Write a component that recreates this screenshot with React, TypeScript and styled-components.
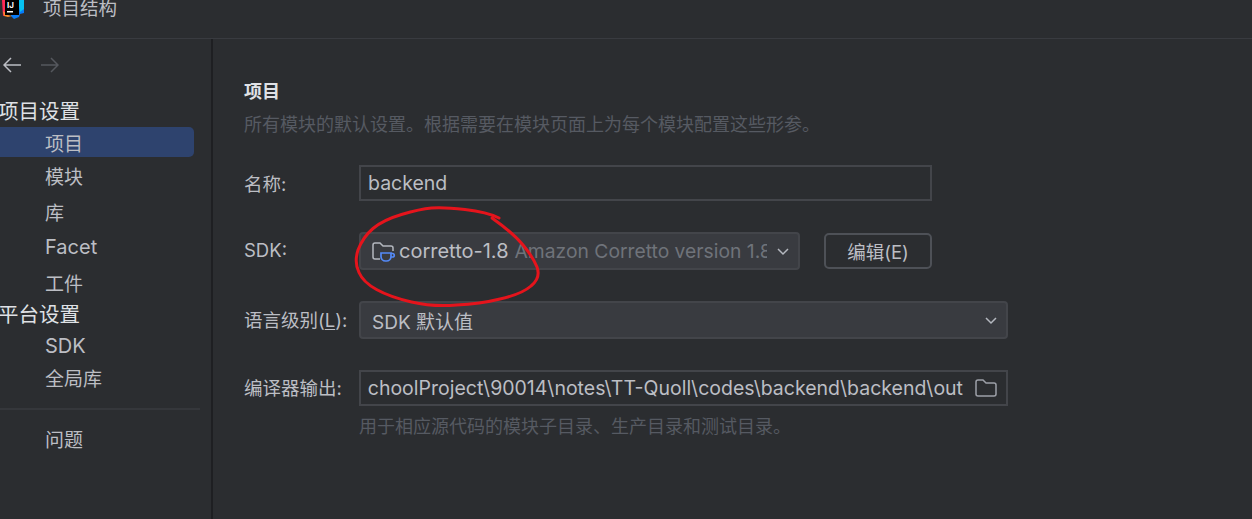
import React from "react";
import styled, { createGlobalStyle } from "styled-components";

const CJK = `Inter, "Noto Sans CJK SC", sans-serif`;

const GlobalStyle = createGlobalStyle`
  html, body {
    margin: 0;
    padding: 0;
    background: #2b2d30;
    overflow: hidden;
  }
  * { box-sizing: border-box; }
`;

const Page = styled.div`
  position: relative;
  width: 1252px;
  height: 519px;
  overflow: hidden;
  display: flex;
  flex-direction: column;
  background: #2b2d30;
  color: #bcbec4;
  font-family: ${CJK};
  font-size: 18px;
`;

const TitleBar = styled.header`
  height: 39px;
  flex: none;
  display: flex;
  align-items: flex-start;
  gap: 19px;
  padding-left: 1px;
  border-bottom: 1px solid #393b40;
  overflow: hidden;
`;

const LogoWrap = styled.div`
  width: 23px;
  height: 19px;
  flex: none;
`;

const WindowTitle = styled.span`
  font-size: 18.5px;
  line-height: 16px;
  color: #bcbec4;
`;

const Body = styled.div`
  flex: 1;
  display: flex;
  min-height: 0;
`;

const Sidebar = styled.nav`
  width: 213px;
  flex: none;
  border-right: 2px solid #1e1f22;
  padding-top: 17px;
`;

const NavArrows = styled.div`
  display: flex;
  align-items: center;
  gap: 20px;
  height: 18px;
  padding-left: 3px;
  margin-bottom: 27px;
`;

const GroupTitle = styled.div<{ $top?: number }>`
  height: 22px;
  line-height: 22px;
  margin-left: -2px;
  font-size: 20.5px;
  white-space: nowrap;
  color: #dfe1e5;
  margin-top: ${(p) => p.$top ?? 0}px;
`;

const NavItem = styled.div<{ $selected?: boolean; $height?: number; $top?: number; $latin?: boolean }>`
  width: 194px;
  height: ${(p) => p.$height ?? 35.5}px;
  margin-top: ${(p) => p.$top ?? 0}px;
  display: flex;
  align-items: center;
  padding-left: 45px;
  font-size: ${(p) => (p.$latin ? 20 : 19)}px;
  color: #bcbec4;
  border-radius: 0 5px 5px 0;
  background: ${(p) => (p.$selected ? "#2e436e" : "transparent")};
`;

const NavDivider = styled.hr`
  width: 200px;
  height: 2px;
  border: none;
  background: #35373b;
  margin: 18px 0 11px;
`;

const Content = styled.main`
  flex: 1;
  padding: 42px 0 0 31px;
`;

const Heading = styled.h2`
  margin: 0;
  font-size: 18px;
  font-weight: 700;
  line-height: 22px;
  color: #dfe1e5;
`;

const Description = styled.p`
  margin: 11px 0 0;
  font-size: 18px;
  line-height: 22px;
  color: #565a62;
`;

const Form = styled.div`
  display: grid;
  grid-template-columns: 115px 1fr;
  width: 764px;
  margin-top: 29px;
  align-items: center;
`;

const Label = styled.label<{ $top?: number }>`
  font-size: 18.5px;
  color: #bcbec4;
  white-space: nowrap;
  margin-top: ${(p) => p.$top ?? 0}px;
  u { text-underline-offset: 2px; }
`;

const Row = styled.div<{ $top: number }>`
  display: flex;
  align-items: center;
  gap: 24px;
  margin-top: ${(p) => p.$top}px;
`;

const TextField = styled.div<{ $width: number }>`
  width: ${(p) => p.$width}px;
  height: 36px;
  display: flex;
  align-items: center;
  gap: 11px;
  padding: 0 8px 0 7px;
  border: 2px solid #43454a;
  background: #2b2d30;
  font-size: 19.5px;
  color: #bcbec4;
  overflow: hidden;
`;

const PathClip = styled.div`
  flex: 1;
  min-width: 0;
  display: flex;
  justify-content: flex-end;
  overflow: hidden;
  white-space: nowrap;
`;

const PathText = styled.span`
  flex: none;
`;

const Select = styled.div<{ $width: number }>`
  width: ${(p) => p.$width}px;
  height: 38px;
  display: flex;
  align-items: center;
  padding: 0 7px 0 11px;
  border: 2px solid #43454a;
  border-radius: 4px;
  background: #393b40;
  font-size: 20px;
  color: #bcbec4;
`;

const SelectValue = styled.div<{ $small?: boolean }>`
  flex: 1;
  min-width: 0;
  display: flex;
  align-items: center;
  overflow: hidden;
  white-space: nowrap;
  font-size: ${(p) => (p.$small ? 19 : 20)}px;
`;

const ChevronWrap = styled.span`
  flex: none;
  display: flex;
  margin-left: 8px;
`;

const Muted = styled.span`
  color: #6f737a;
  font-size: 19.3px;
  margin-left: 6px;
`;

const Button = styled.button`
  width: 108px;
  height: 36px;
  padding: 0;
  background: #2b2d30;
  border: 2px solid #4e5157;
  border-radius: 5px;
  color: #bcbec4;
  font-family: inherit;
  font-size: 18.5px;
`;

const Hint = styled.div`
  grid-column: 2;
  margin-top: 10px;
  font-size: 18px;
  line-height: 22px;
  color: #565a62;
`;

const Scribble = styled.svg`
  position: absolute;
  left: 350px;
  top: 200px;
  pointer-events: none;
`;

const SdkGlyph = styled.svg`
  flex: none;
  margin-right: 3px;
`;

const FolderGlyph = styled.svg`
  flex: none;
`;

const Chevron = () => (
  <ChevronWrap>
    <svg width="16" height="16" viewBox="0 0 16 16" fill="none" stroke="#b4b8bf" strokeWidth="1.5">
      <path d="M3 6l5 5 5-5" />
    </svg>
  </ChevronWrap>
);

const SdkIcon = () => (
  <SdkGlyph width="24" height="24" viewBox="0 0 24 24" fill="none">
    <path d="M8 20H3a2 2 0 0 1-2-2V6a2 2 0 0 1 2-2h5l3 3h8a2 2 0 0 1 2 2v3" stroke="#b4b8bf" strokeWidth="1.5" />
    <path d="M9 14h10v3.5a4.5 4.5 0 0 1-4.5 4.5h-1A4.5 4.5 0 0 1 9 17.5z" stroke="#548af7" strokeWidth="1.7" />
    <path d="M19 14.5h1.5a1.5 1.5 0 0 1 0 3.5H19" stroke="#548af7" strokeWidth="1.7" />
  </SdkGlyph>
);

const FolderIcon = () => (
  <FolderGlyph width="24" height="20" viewBox="0 0 24 20" fill="none" stroke="#9da0a8" strokeWidth="1.5">
    <path d="M2 4a2 2 0 0 1 2-2h5l3 3h8a2 2 0 0 1 2 2v9a2 2 0 0 1-2 2H4a2 2 0 0 1-2-2z" />
  </FolderGlyph>
);

const App: React.FC = () => {
  return (
    <>
      <GlobalStyle />
      <Page>
        <TitleBar>
          <LogoWrap>
            <svg width="23" height="19" viewBox="0 0 23 19">
              <path d="M10 0h13v13l-4 1-1 3-5 2-3-3z" fill="#087cfa" />
              <path d="M17 0h6v9l-4 3z" fill="#07c3f2" />
              <path d="M1 0h5v10l-1 5-3 1z" fill="#fe2857" />
              <path d="M2 11l5 4 4 1-4 1-4-1z" fill="#fd8d2a" />
              <rect x="4" y="0" width="14" height="15" fill="#000" />
              <rect x="6" y="11" width="6" height="1.5" fill="#fff" />
              <text x="6" y="8" fontSize="8" fontWeight="700" fontFamily="Inter, sans-serif" fill="#fff">IJ</text>
            </svg>
          </LogoWrap>
          <WindowTitle>项目结构</WindowTitle>
        </TitleBar>
        <Body>
          <Sidebar>
            <NavArrows>
              <svg width="18" height="16" viewBox="0 0 18 16" fill="none" stroke="#bcbec4" strokeWidth="1.5">
                <path d="M18 8H1M8 1L1 8l7 7" />
              </svg>
              <svg width="18" height="16" viewBox="0 0 18 16" fill="none" stroke="#55585e" strokeWidth="1.5">
                <path d="M0 8h17M10 1l7 7-7 7" />
              </svg>
            </NavArrows>
            <GroupTitle>项目设置</GroupTitle>
            <NavItem $selected $height={30} $top={4}>项目</NavItem>
            <NavItem $top={1}>模块</NavItem>
            <NavItem>库</NavItem>
            <NavItem $latin>Facet</NavItem>
            <NavItem>工件</NavItem>
            <GroupTitle $top={4}>平台设置</GroupTitle>
            <NavItem $latin $height={39}>SDK</NavItem>
            <NavItem $height={25}>全局库</NavItem>
            <NavDivider />
            <NavItem>问题</NavItem>
          </Sidebar>
          <Content>
            <Heading>项目</Heading>
            <Description>所有模块的默认设置。根据需要在模块页面上为每个模块配置这些形参。</Description>
            <Form>
              <Label>名称:</Label>
              <TextField $width={573}>backend</TextField>
              <Label $top={29}>SDK:</Label>
              <Row $top={31}>
                <Select $width={441}>
                  <SelectValue>
                    <SdkIcon />
                    corretto-1.8<Muted>Amazon Corretto version 1.8.0_412</Muted>
                  </SelectValue>
                  <Chevron />
                </Select>
                <Button>编辑(E)</Button>
              </Row>
              <Label $top={29}>语言级别(<u>L</u>):</Label>
              <Row $top={31}>
                <Select $width={649}>
                  <SelectValue $small>SDK 默认值</SelectValue>
                  <Chevron />
                </Select>
              </Row>
              <Label $top={29}>编译器输出:</Label>
              <Row $top={31}>
                <TextField $width={649}>
                  <PathClip>
                    <PathText>D:\SchoolProject\90014\notes\TT-Quoll\codes\backend\backend\out</PathText>
                  </PathClip>
                  <FolderIcon />
                </TextField>
              </Row>
              <Hint>用于相应源代码的模块子目录、生产目录和测试目录。</Hint>
            </Form>
          </Content>
        </Body>
        <Scribble width="200" height="110" viewBox="0 0 200 110" fill="none">
          <path
            d="M149 18Q137 12 115 9.5Q93 7 81.5 8Q70 9 51.5 14.5Q33 20 23 28.5Q13 37 8 50Q4 63 9 72.5Q13 82 26.5 89.5Q40 97 61.5 102Q83 107 106.5 105Q130 104 150 99Q172 94 181 86Q191 78 187 67Q183 57 173 45Q163 33 142 18"
            stroke="#e5141c"
            strokeWidth="3"
            strokeLinecap="round"
          />
        </Scribble>
      </Page>
    </>
  );
};

export default App;
